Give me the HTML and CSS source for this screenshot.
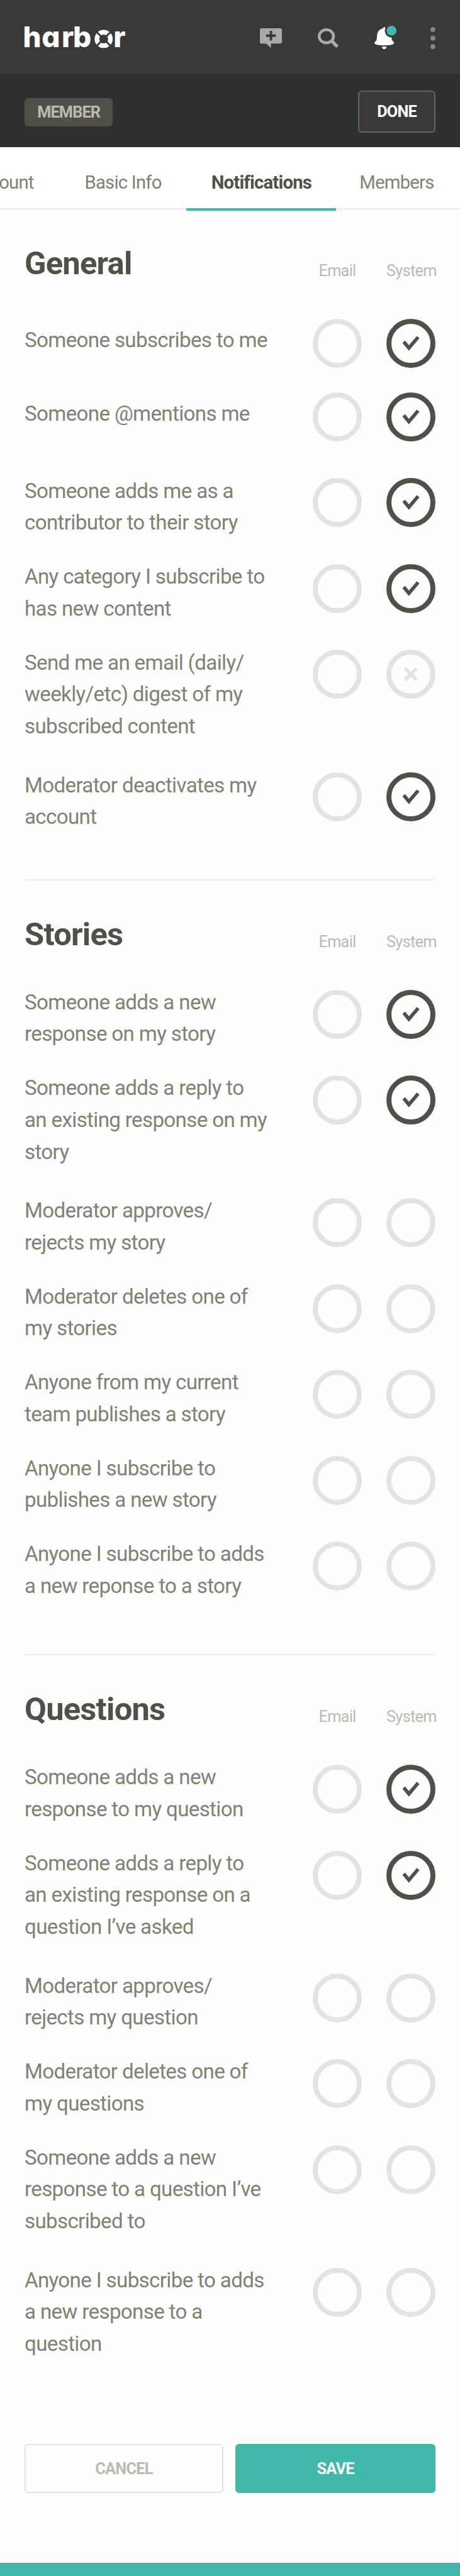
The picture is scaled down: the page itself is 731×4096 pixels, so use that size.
FILE: index.html
```html
<!DOCTYPE html>
<html lang="en">
<head>
<meta charset="utf-8">
<title>Harbor – Notifications</title>
<link rel="stylesheet" href="styles.css">
</head>
<body>
<svg class="defs" aria-hidden="true">
  <symbol id="check" viewBox="0 0 80 80"><path d="M28.300 37.300 L36.700 47.500 L51.800 29.800" fill="none" stroke="currentColor" stroke-width="5.700"/></symbol>
  <symbol id="cross" viewBox="0 0 80 80"><path d="M30.500 30.500 L49.500 49.500 M49.500 30.500 L30.500 49.500" fill="none" stroke="currentColor" stroke-width="5.500"/></symbol>
</svg>
<header class="topbar">
  <svg class="logo" viewBox="0 0 162 36" role="img" aria-label="harbor">
    <text class="wordmark" y="35" x="-2.500 28 60.500 79">harb</text>
    <g transform="translate(129 21.500)">
      <circle r="11" fill="none" stroke="#fff" stroke-width="7.500"/>
      <path d="M-12 -12 L12 12 M12 -12 L-12 12" stroke="#383938" stroke-width="3"/>
    </g>
    <text class="wordmark" y="35" x="145">r</text>
  </svg>
  <nav class="actions">
    <svg class="icon-add" viewBox="0 0 36 32"><path fill="#aaaaa9" d="M3 0H33Q36 0 36 3V22Q36 25 33 25H18V32L10 25H3Q0 25 0 22V3Q0 0 3 0Z"/><path d="M18 4V20M10 12H26" stroke="#383938" stroke-width="4"/></svg>
    <svg class="icon-search" viewBox="0 0 35 33"><ellipse cx="14" cy="13" rx="11.700" ry="10.700" fill="none" stroke="#aaaaa9" stroke-width="4.600"/><path d="M22 20L32 30" stroke="#aaaaa9" stroke-width="5.500"/></svg>
    <svg class="icon-bell" viewBox="0 0 36 38"><path fill="#fff" d="M14 4Q14 2 16 2Q18 2 18 4Q24 5 26 11Q28 15 28 20Q28 24 31 26Q32 27 32 29Q29 32 16 32Q3 32 0 29Q0 27 1 26Q4 24 4 19Q4 6 14 4ZM12 34H20Q19 38 16 38Q13 38 12 34Z"/><circle cx="28" cy="8" r="11" fill="#383938"/><circle cx="28" cy="8" r="8" fill="#42b8aa"/></svg>
    <svg class="icon-more" viewBox="0 0 8 36" fill="#858685"><circle cx="4" cy="4" r="4"/><circle cx="4" cy="18" r="4"/><circle cx="4" cy="32" r="4"/></svg>
  </nav>
</header>
<div class="subbar">
  <span class="badge">MEMBER</span>
  <button class="done">DONE</button>
</div>
<nav class="tabs">
  <a class="tab tab-account">Account</a>
  <a class="tab tab-basic">Basic Info</a>
  <a class="tab active">Notifications</a>
  <a class="tab tab-members">Members</a>
</nav>
<main>
  <section>
    <div class="head"><h2>General</h2><span class="col">Email</span><span class="col">System</span></div>
    <div class="row single first"><p>Someone subscribes to me</p><i class="ring"></i><i class="ring on"><svg><use href="#check"/></svg></i></div>
    <div class="row single"><p>Someone @mentions me</p><i class="ring"></i><i class="ring on"><svg><use href="#check"/></svg></i></div>
    <div class="row"><p>Someone adds me as a<br>contributor to their story</p><i class="ring"></i><i class="ring on"><svg><use href="#check"/></svg></i></div>
    <div class="row"><p>Any category I subscribe to<br>has new content</p><i class="ring"></i><i class="ring on"><svg><use href="#check"/></svg></i></div>
    <div class="row tall"><p>Send me an email (daily/<br>weekly/etc) digest of my<br>subscribed content</p><i class="ring"></i><i class="ring"><svg><use href="#cross"/></svg></i></div>
    <div class="row"><p>Moderator deactivates my<br>account</p><i class="ring"></i><i class="ring on"><svg><use href="#check"/></svg></i></div>
  </section>
  <section>
    <div class="head"><h2>Stories</h2><span class="col">Email</span><span class="col">System</span></div>
    <div class="row"><p>Someone adds a new<br>response on my story</p><i class="ring"></i><i class="ring on"><svg><use href="#check"/></svg></i></div>
    <div class="row tall"><p>Someone adds a reply to<br>an existing response on my<br>story</p><i class="ring"></i><i class="ring on"><svg><use href="#check"/></svg></i></div>
    <div class="row"><p>Moderator approves/<br>rejects my story</p><i class="ring"></i><i class="ring"></i></div>
    <div class="row"><p>Moderator deletes one of<br>my stories</p><i class="ring"></i><i class="ring"></i></div>
    <div class="row"><p>Anyone from my current<br>team publishes a story</p><i class="ring"></i><i class="ring"></i></div>
    <div class="row"><p>Anyone I subscribe to<br>publishes a new story</p><i class="ring"></i><i class="ring"></i></div>
    <div class="row"><p>Anyone I subscribe to adds<br>a new reponse to a story</p><i class="ring"></i><i class="ring"></i></div>
  </section>
  <section>
    <div class="head"><h2>Questions</h2><span class="col">Email</span><span class="col">System</span></div>
    <div class="row"><p>Someone adds a new<br>response to my question</p><i class="ring"></i><i class="ring on"><svg><use href="#check"/></svg></i></div>
    <div class="row tall"><p>Someone adds a reply to<br>an existing response on a<br>question I’ve asked</p><i class="ring"></i><i class="ring on"><svg><use href="#check"/></svg></i></div>
    <div class="row"><p>Moderator approves/<br>rejects my question</p><i class="ring"></i><i class="ring"></i></div>
    <div class="row"><p>Moderator deletes one of<br>my questions</p><i class="ring"></i><i class="ring"></i></div>
    <div class="row tall"><p>Someone adds a new<br>response to a question I’ve<br>subscribed to</p><i class="ring"></i><i class="ring"></i></div>
    <div class="row tall"><p>Anyone I subscribe to adds<br>a new response to a<br>question</p><i class="ring"></i><i class="ring"></i></div>
  </section>
  <div class="buttons"><button class="cancel">CANCEL</button><button class="save">SAVE</button></div>
</main>
<footer></footer>
</body>
</html>
```
FILE: styles.css
```css
/* 1rem = ten design units */
html { font-size: 9.75px; }
* { box-sizing: border-box; }
body {
  margin: 0;
  min-height: 100vh;
  display: flex;
  flex-direction: column;
  overflow: hidden;
  background: #fefefe;
  color: #808274;
  font-family: Roboto, "Liberation Sans", sans-serif;
}
.defs { display: none; }
svg { display: block; flex: none; }
button { font: inherit; padding: 0; }

.topbar {
  height: 12rem;
  padding: 4.2rem 4rem 0;
  display: flex;
  justify-content: space-between;
  background: #383938;
}
.logo { width: 16.2rem; height: 3.6rem; overflow: visible; }
.wordmark { font: 800 47px Inter, sans-serif; font-feature-settings: "cv11"; fill: #fff; }
.actions { display: flex; }
.icon-add { width: 3.6rem; height: 3.2rem; margin: .4rem 5.8rem 0 0; }
.icon-search { width: 3.5rem; height: 3.3rem; margin: .4rem 5.7rem 0 0; }
.icon-bell { width: 3.6rem; height: 3.8rem; margin-right: 5.6rem; }
.icon-more { width: .8rem; height: 3.6rem; margin-top: .2rem; }

.subbar {
  height: 12rem;
  padding: 2.8rem 4rem 0;
  display: flex;
  justify-content: space-between;
  background: #2f3130;
  font-size: 2.6rem;
  font-weight: 700;
}
.badge {
  width: 14.4rem;
  height: 4.6rem;
  margin-top: 1.2rem;
  border-radius: .6rem;
  background: #4f5149;
  color: #bcb9af;
  line-height: 4.6rem;
  text-align: center;
  letter-spacing: -.09rem;
}
.done {
  width: 12.6rem;
  height: 6.8rem;
  border: 2px solid #66645c;
  border-radius: .6rem;
  background: #383938;
  color: #fff;
  letter-spacing: -.09rem;
}

.tabs {
  height: 10.2rem;
  display: flex;
  border-bottom: 2px solid #eee;
  background: #fff;
  font-size: 3rem;
  line-height: 11.6rem;
  letter-spacing: -.08rem;
}
.tab { height: 10.4rem; white-space: nowrap; }
.tab-account { width: 5.5rem; display: flex; justify-content: flex-end; }
.tab-basic { width: 24.9rem; padding-left: 8.3rem; }
.active {
  width: 24.4rem;
  border-bottom: 4px solid #42b8aa;
  color: #4f5149;
  font-weight: 700;
  text-align: center;
}
.tab-members { padding-left: 3.8rem; }

main { padding: 0 4rem; }
section { height: 126.4rem; border-bottom: 2px solid #eee; }
section:first-child { height: 109.4rem; }
section:last-of-type { height: 128.6rem; border: 0; }
.head {
  height: 17.8rem;
  padding-top: 5.3rem;
  display: grid;
  grid-template-columns: 1fr 8rem 8rem;
  column-gap: 4rem;
  align-items: baseline;
  align-content: start;
}
h2 { margin: 0; color: #4f5149; font-size: 5.2rem; line-height: 7rem; letter-spacing: -.08rem; }
.col { transform: translateY(.3rem); color: #bcb9af; font-size: 2.6rem; text-align: center; letter-spacing: -.075rem; }
.row { height: 14rem; display: flex; }
.row p { width: 47rem; margin: -.5rem 0 0; font-size: 3.4rem; line-height: 5.2rem; letter-spacing: -.068rem; white-space: nowrap; }
.row.single p { margin-top: .9rem; }
.row.first { height: 12rem; }
.row.tall { height: 20rem; }
.ring { width: 8rem; height: 8rem; flex: none; border: 8px solid #e4e3df; border-radius: 50%; color: #e4e3df; }
.ring + .ring { margin-left: 4rem; }
.ring.on { border-color: #4f5149; color: #4f5149; }
.ring svg { width: 8rem; height: 8rem; margin: -8px; }

.buttons { display: flex; gap: 2rem; font-size: 2.6rem; font-weight: 700; }
.buttons button { height: 8rem; border-radius: .6rem; letter-spacing: -.08rem; }
.cancel { width: 32.4rem; border: 2px solid #e4e3df; background: none; color: #bcb9af; }
.save { flex: 1; border: 0; background: #42b8aa; color: #fff; }
footer { flex: 1; margin-top: 11.4rem; background: #42b8aa; }
```
